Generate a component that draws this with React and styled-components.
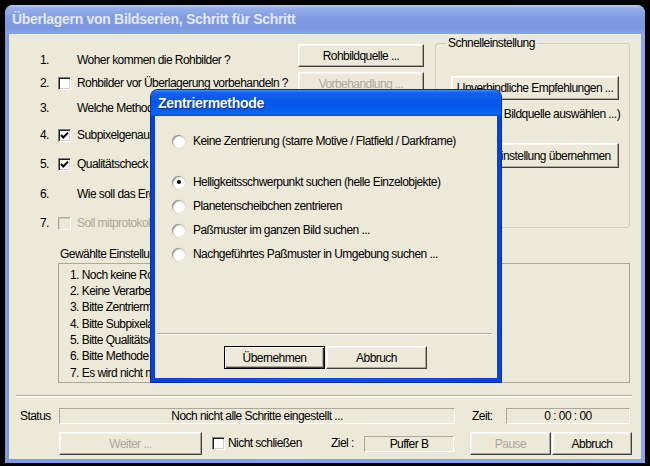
import React from "react";
import styled, { createGlobalStyle, css } from "styled-components";

const FONT = `"Liberation Sans", Arial, sans-serif`;

const Global = createGlobalStyle`
  html, body { margin: 0; padding: 0; background: #000; }
  body {
    font-family: ${FONT};
    font-size: 12px;
    letter-spacing: -0.55px;
    line-height: 15px;
    color: #000;
  }
  * { box-sizing: border-box; }
`;

const Desktop = styled.div`
  position: relative;
  width: 650px;
  height: 466px;
  overflow: hidden;
  background: #000;
  padding: 5px 0 0 5px;
`;

const Window = styled.div`
  width: 640px;
  height: 458px;
  display: flex;
  flex-direction: column;
  border-radius: 8px 8px 0 0;
  background: linear-gradient(to right, #7e9ae1, #8ca6e6);
`;

const TitleBar = styled.div`
  height: 29px;
  flex: none;
  display: flex;
  align-items: center;
  padding-left: 7px;
  border-radius: 8px 8px 0 0;
  background: linear-gradient(
    to bottom,
    #b9cbf4 0%,
    #98b0ea 10%,
    #7f9be2 45%,
    #7c98e0 80%,
    #88a3e5 100%
  );
  color: #e2eafa;
  font-weight: bold;
  font-size: 14px;
  letter-spacing: -0.3px;
  white-space: nowrap;
`;

const Client = styled.div`
  flex: 1;
  margin: 0 4px 4px;
  background: #ece9d8;
  display: flex;
  flex-direction: column;
`;

const Top = styled.div`
  display: flex;
  padding-top: 2px;
  height: 204px;
`;

const Steps = styled.div`
  width: 426px;
  flex: none;
  padding-top: 12.5px;
  display: flex;
  flex-direction: column;
`;

const StepRow = styled.div`
  height: ${(p) => p.$h}px;
  display: grid;
  grid-template-columns: 31px 18px 19px 221px 126px;
  align-items: center;
  white-space: nowrap;
`;

const StepNum = styled.span`
  grid-column: 2;
`;

const StepLabel = styled.span`
  grid-column: 4;
  color: ${(p) => (p.$disabled ? "#aca899" : "#000")};
`;

const Button = styled.button`
  font-family: ${FONT};
  font-size: 12px;
  letter-spacing: -0.55px;
  height: ${(p) => p.$h || 23}px;
  width: ${(p) => (p.$w ? `${p.$w}px` : "auto")};
  flex: none;
  padding: 0;
  white-space: nowrap;
  background: #ece9d8;
  color: ${(p) => (p.disabled ? "#aca899" : "#000")};
  border: 1px solid;
  border-color: #fff #404040 #404040 #fff;
  box-shadow: inset -1px -1px 0 #aca899, inset 1px 1px 0 #f7f6f0;
  cursor: default;
  ${(p) =>
    p.$default &&
    css`
      border-color: #000;
      box-shadow: inset 1px 1px 0 #fff, inset -1px -1px 0 #404040,
        inset -2px -2px 0 #aca899;
    `}
  ${(p) =>
    p.$raise &&
    css`
      align-self: start;
      margin-top: -4.5px;
    `}
`;

const StepButton = styled(Button)`
  grid-column: 5;
`;

const CheckBox = styled.span`
  grid-column: ${(p) => p.$col || "auto"};
  width: 13px;
  height: 13px;
  flex: none;
  display: inline-flex;
  align-items: center;
  justify-content: center;
  background: ${(p) => (p.$disabled ? "#ece9d8" : "#fff")};
  border: 1px solid;
  border-color: ${(p) =>
    p.$disabled ? "#aca899 #fff #fff #aca899" : "#808080 #fff #fff #808080"};
  box-shadow: ${(p) =>
    p.$disabled
      ? "inset 1px 1px 0 #d4d0c8"
      : "inset 1px 1px 0 #1e1e1e, inset -1px -1px 0 #d4d0c8"};
`;

const Check = ({ on, col, disabled }) => (
  <CheckBox $col={col} $disabled={disabled}>
    {on && (
      <svg width="9" height="9" viewBox="0 0 9 9">
        <path d="M1 4 L3.3 6.5 L8 1.6" fill="none" stroke="#000" strokeWidth="2" />
      </svg>
    )}
  </CheckBox>
);

const Group = styled.fieldset`
  margin: 0;
  flex: none;
  width: 195px;
  min-width: 0;
  height: 192px;
  padding: 0 10px 0 15px;
  border: 1px solid #d0d0bf;
  border-radius: 3px;
  display: flex;
  flex-direction: column;
`;

const Legend = styled.legend`
  margin-left: -5px;
  padding: 0 2px;
  line-height: 15px;
`;

const GroupButton = styled(Button)`
  margin-top: ${(p) => p.$mt}px;
  align-self: flex-end;
`;

const GroupNote = styled.div`
  margin-top: 7px;
  height: 14px;
  line-height: 14px;
  text-align: right;
  white-space: nowrap;
  padding-right: 1px;
`;

const SettingsLabel = styled.div`
  margin: 9px 0 0 51px;
  height: 14px;
  line-height: 14px;
`;

const SettingsBox = styled.div`
  margin: 2px 0 0 49px;
  width: 572px;
  height: 120px;
  border: 1px solid #aca899;
  padding: 2.85px 0 0 11px;
  line-height: 16.3px;
  white-space: nowrap;
`;

const Separator = styled.div`
  height: 2px;
  flex: none;
  margin: ${(p) => p.$m};
  border-top: 1px solid #aca899;
  border-bottom: 1px solid #fff;
`;

const StatusRow = styled.div`
  margin-top: 11px;
  height: 16px;
  display: flex;
  align-items: center;
  padding-left: 11px;
  white-space: nowrap;
`;

const Label = styled.span`
  width: ${(p) => p.$w}px;
  margin-left: ${(p) => p.$ml || 0}px;
  flex: none;
  white-space: nowrap;
`;

const Field = styled.div`
  width: ${(p) => p.$w}px;
  height: 16px;
  flex: none;
  border: 1px solid;
  border-color: #aca899 #fff #fff #aca899;
  line-height: 14px;
  text-align: center;
  white-space: nowrap;
`;

const BottomRow = styled.div`
  margin-top: 8px;
  height: 23px;
  display: flex;
  align-items: center;
  padding-left: 50px;
`;

const Gap = styled.span`
  width: ${(p) => p.$w}px;
  flex: none;
`;

/* Dialog */
const Dialog = styled.div`
  position: absolute;
  left: 151px;
  top: 90px;
  width: 350px;
  height: 292px;
  display: flex;
  flex-direction: column;
  border-radius: 7px 7px 0 0;
  background: linear-gradient(to right, #0841d6, #0a52e4 50%, #0841d6);
  box-shadow: 0 0 0 1px #0a2fa8;
`;

const DialogTitle = styled.div`
  height: 26px;
  flex: none;
  display: flex;
  align-items: center;
  padding-left: 7px;
  border-radius: 7px 7px 0 0;
  background: linear-gradient(
    to bottom,
    #3d8ff8 0%,
    #1463ec 10%,
    #0457e8 40%,
    #045ded 75%,
    #0a66f3 90%,
    #0850de 100%
  );
  color: #fff;
  font-weight: bold;
  font-size: 14px;
  letter-spacing: -0.3px;
  text-shadow: 1px 1px 0 #0b2a8a;
`;

const DialogBody = styled.div`
  flex: 1;
  margin: 0 4px 4px;
  background: #ece9d8;
  display: flex;
  flex-direction: column;
  padding-top: 13px;
`;

const RadioRow = styled.div`
  height: 24px;
  flex: none;
  display: flex;
  align-items: center;
  padding-left: 17px;
  margin-top: ${(p) => p.$mt || 0}px;
  white-space: nowrap;
`;

const RadioDot = styled.span`
  width: 13px;
  height: 13px;
  flex: none;
  margin-right: 8px;
  border-radius: 50%;
  display: inline-flex;
  align-items: center;
  justify-content: center;
  background: radial-gradient(circle at 60% 60%, #fff 45%, #f1efe6 75%, #d8d5c8 100%);
  box-shadow: inset 1px 1px 1px #8d8b80, 0 0 0 0.5px #d6d3c6;
  ${(p) =>
    p.$checked &&
    css`
      &::after {
        content: "";
        width: 4px;
        height: 4px;
        border-radius: 50%;
        background: #000;
      }
    `}
`;

const DialogButtons = styled.div`
  margin-top: 11px;
  display: flex;
  justify-content: center;
  gap: 1px;
  padding-right: 1px;
`;

const steps = [
  { n: "1.", label: "Woher kommen die Rohbilder ?", h: 23, btn: "Rohbildquelle ...", raise: true },
  { n: "2.", label: "Rohbilder vor Überlagerung vorbehandeln ?", h: 24, check: "off", btn: "Vorbehandlung ...", btnDisabled: true },
  { n: "3.", label: "Welche Methode zur Zentrierung ?", h: 25.5, btn: "Zentrierung ..." },
  { n: "4.", label: "Subpixelgenauigkeit ?", h: 28.5, check: "on" },
  { n: "5.", label: "Qualitätscheck ?", h: 30, check: "on" },
  { n: "6.", label: "Wie soll das Ergebnis aussehen ?", h: 29, btn: "Ergebnis ..." },
  { n: "7.", label: "Soll mitprotokolliert werden ?", h: 29, check: "disabled", disabled: true },
];

const settings = [
  "1. Noch keine Rohbildquelle ausgewählt",
  "2. Keine Verarbeitung vor der Überlagerung",
  "3. Bitte Zentriermethode auswählen",
  "4. Bitte Subpixelauswertung einstellen",
  "5. Bitte Qualitätscheck einstellen",
  "6. Bitte Methode der Ergebnisausgabe wählen",
  "7. Es wird nicht mitprotokolliert",
];

const radios = [
  { t: "Keine Zentrierung (starre Motive / Flatfield / Darkframe)", mt: 0 },
  { t: "Helligkeitsschwerpunkt suchen (helle Einzelobjekte)", mt: 17, on: true },
  { t: "Planetenscheibchen zentrieren", mt: 0 },
  { t: "Paßmuster im ganzen Bild suchen ...", mt: 0 },
  { t: "Nachgeführtes Paßmuster in Umgebung suchen ...", mt: 0 },
];

export default function App() {
  return (
    <Desktop>
      <Global />
      <Window>
        <TitleBar>Überlagern von Bildserien, Schritt für Schritt</TitleBar>
        <Client>
          <Top>
            <Steps>
              {steps.map((s) => (
                <StepRow key={s.n} $h={s.h}>
                  <StepNum>{s.n}</StepNum>
                  {s.check && (
                    <Check col={3} on={s.check === "on"} disabled={s.check === "disabled"} />
                  )}
                  <StepLabel $disabled={s.disabled}>{s.label}</StepLabel>
                  {s.btn && (
                    <StepButton disabled={s.btnDisabled} $raise={s.raise}>
                      {s.btn}
                    </StepButton>
                  )}
                </StepRow>
              ))}
            </Steps>
            <Group>
              <Legend>Schnelleinstellung</Legend>
              <GroupButton $h={24} $w={168} $mt={25}>
                Unverbindliche Empfehlungen ...
              </GroupButton>
              <GroupNote>(zuerst die Bildquelle auswählen ...)</GroupNote>
              <GroupButton $h={25} $w={134} $mt={22}>
                Einstellung übernehmen
              </GroupButton>
            </Group>
          </Top>
          <SettingsLabel>Gewählte Einstellungen</SettingsLabel>
          <SettingsBox>
            {settings.map((t) => (
              <div key={t}>{t}</div>
            ))}
          </SettingsBox>
          <Separator $m="12px 9px 0 7px" />
          <StatusRow>
            <Label $w={39}>Status</Label>
            <Field $w={396}>Noch nicht alle Schritte eingestellt ...</Field>
            <Label $w={34} $ml={17}>Zeit:</Label>
            <Field $w={124}>0 : 00 : 00</Field>
          </StatusRow>
          <BottomRow>
            <Button $w={143} disabled>
              Weiter ...
            </Button>
            <Gap $w={10} />
            <Check />
            <Label $w={103} $ml={3}>Nicht schließen</Label>
            <Label $w={33}>Ziel :</Label>
            <Field $w={90}>Puffer B</Field>
            <Gap $w={16} />
            <Button $w={81} disabled>
              Pause
            </Button>
            <Gap $w={1} />
            <Button $w={80}>Abbruch</Button>
          </BottomRow>
        </Client>
      </Window>

      <Dialog>
        <DialogTitle>Zentriermethode</DialogTitle>
        <DialogBody>
          {radios.map((r) => (
            <RadioRow key={r.t} $mt={r.mt}>
              <RadioDot $checked={r.on} />
              {r.t}
            </RadioRow>
          ))}
          <Separator $m="67px 5px 0 2px" />
          <DialogButtons>
            <Button $w={101} $default>
              Übernehmen
            </Button>
            <Button $w={101}>Abbruch</Button>
          </DialogButtons>
        </DialogBody>
      </Dialog>
    </Desktop>
  );
}
